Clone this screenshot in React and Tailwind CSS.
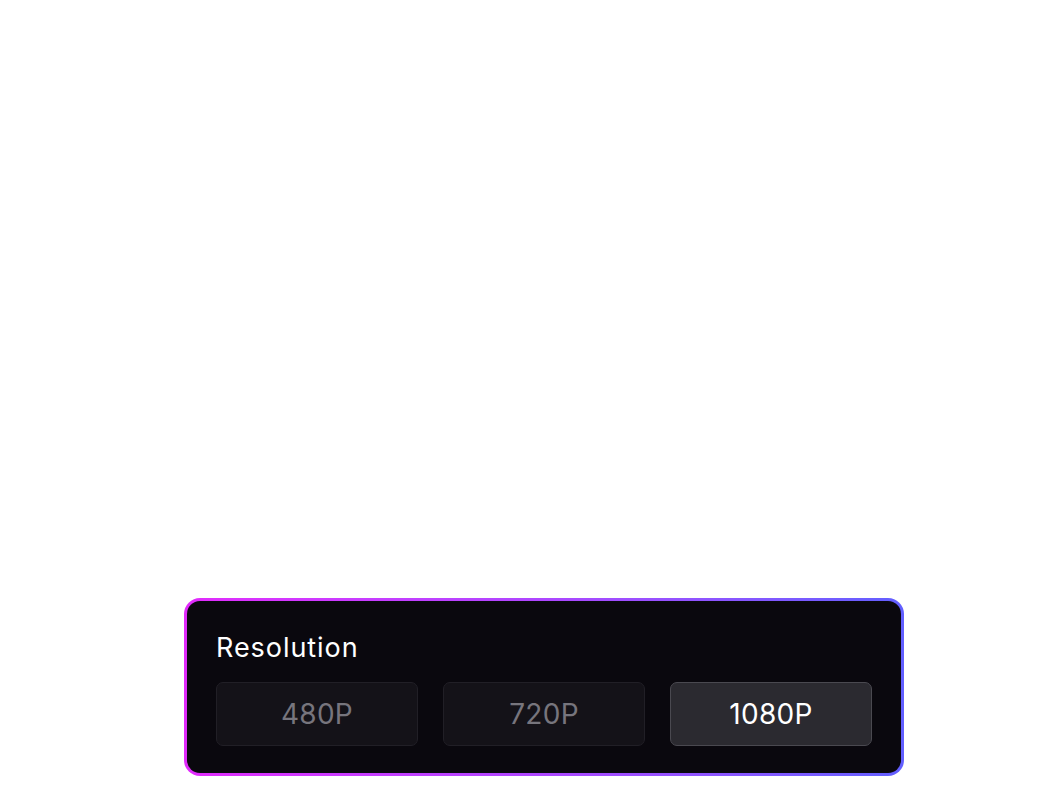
import React, { useState } from "react";

const options = ["480P", "720P", "1080P"];

export default function App() {
  const [selected, setSelected] = useState("1080P");

  return (
    <div className="min-h-screen bg-white flex items-end pl-[184px] pb-4 font-['Inter',sans-serif]">
      {/* gradient frame */}
      <div className="w-[720px] rounded-2xl p-[3px] bg-gradient-to-r from-fuchsia-500 via-purple-500 to-indigo-500">
        <div className="rounded-[13px] bg-[#0a080e] pl-[29px] pr-[29px] pt-[31px] pb-[27px]">
          <h3 className="text-[27px] leading-8 tracking-[0.035em] text-white font-normal">Resolution</h3>
          <div className="grid grid-cols-3 gap-[25px] mt-[18px]">
            {options.map((opt) => {
              const active = opt === selected;
              return (
                <button
                  key={opt}
                  onClick={() => setSelected(opt)}
                  className={
                    active
                      ? "h-16 rounded-[7px] border border-[#4a4950] bg-[#2b2a30] text-white text-[28px] tracking-[0.01em]"
                      : "h-16 rounded-[7px] border border-[#211f26] bg-[#141218] text-[#77757d] text-[28px] tracking-[0.01em]"
                  }
                >
                  {opt}
                </button>
              );
            })}
          </div>
        </div>
      </div>
    </div>
  );
}
